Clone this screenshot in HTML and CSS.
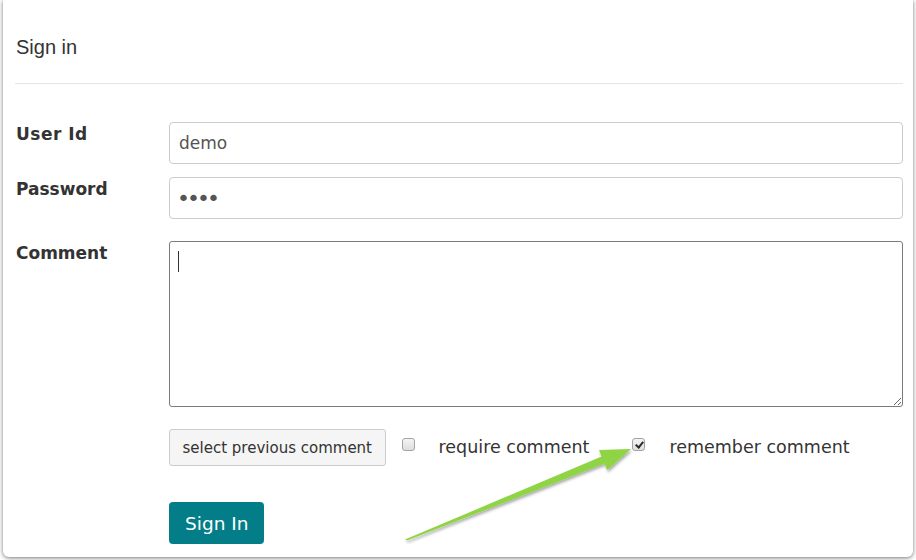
FILE: index.html
```html
<!DOCTYPE html>
<html>
<head>
<meta charset="utf-8">
<link rel="stylesheet" href="styles.css">
</head>
<body>
<div class="page">
  <div class="card">
    <div class="card-header">Sign in</div>
    <form class="form">
      <div class="row row-user">
        <label class="lbl lbl-user" for="uid">User Id</label>
        <input class="field" id="uid" type="text" value="demo">
      </div>
      <div class="row row-pass">
        <label class="lbl" for="pwd">Password</label>
        <input class="field field-pwd" id="pwd" type="password" value="demo">
      </div>
      <div class="row row-comment">
        <label class="lbl" for="cmt">Comment</label>
        <div class="ta-wrap">
          <textarea class="ta" id="cmt"></textarea>
          <span class="caret"></span>
        </div>
      </div>
      <div class="row row-opts">
        <span></span>
        <div class="opts">
          <button type="button" class="btn-prev">select previous comment</button>
          <label class="chk chk-first"><input type="checkbox" class="cb"><span>require comment</span></label>
          <label class="chk"><input type="checkbox" class="cb" checked><span>remember comment</span></label>
        </div>
      </div>
      <div class="row row-submit">
        <span></span>
        <div><button type="button" class="btn-sign">Sign In</button></div>
      </div>
    </form>
  </div>
  <svg class="arrow" width="916" height="560" viewBox="0 0 916 560">
    <defs>
      <filter id="sh" x="-10%" y="-10%" width="120%" height="130%">
        <feDropShadow dx="1" dy="2" stdDeviation="1.5" flood-color="#000" flood-opacity="0.35"/>
      </filter>
    </defs>
    <polygon filter="url(#sh)" fill="#8fd444" points="405,539.5 601.6,456.6 599,449.9 631,449 607.2,470.3 604.6,463.6 407,540.5"/>
  </svg>
</div>
</body>
</html>
```
FILE: styles.css
```css
html, body {
  margin: 0;
  padding: 0;
  background: #ffffff;
}
.page {
  position: relative;
  width: 916px;
  height: 560px;
  overflow: hidden;
  padding: 0 3px;
  box-sizing: border-box;
}
.card {
  background: #fff;
  border-radius: 0 0 6px 6px;
  box-shadow: 0 1px 4px rgba(0, 0, 0, 0.55);
  padding-bottom: 13px;
}
.card-header {
  margin: 0 10px 0 12px;
  padding: 36px 0 24px 1px;
  font-family: "Liberation Sans", Arial, sans-serif;
  font-size: 20px;
  line-height: 23px;
  color: #333;
  border-bottom: 1px solid #e5e5e5;
}
.form {
  margin: 0 10px 0 12px;
  padding-top: 38px;
  font-family: "DejaVu Sans", Verdana, sans-serif;
  color: #333;
}
.row {
  display: grid;
  grid-template-columns: 154px 1fr;
}
.row-user { margin-bottom: 13px; }
.row-pass { margin-bottom: 22px; }
.row-comment { margin-bottom: 22px; }
.row-opts { margin-bottom: 36px; }
.lbl {
  font-weight: bold;
  font-size: 17px;
  padding-top: 2px;
  padding-left: 1px;
  color: #333;
}
.lbl-user {
  letter-spacing: 0.5px;
}
.field {
  height: 42px;
  box-sizing: border-box;
  border: 1px solid #ccc;
  border-radius: 4px;
  padding: 0 9px;
  font-family: "DejaVu Sans", Verdana, sans-serif;
  font-size: 17px;
  color: #555;
  outline: none;
  width: 100%;
  margin: 0;
}
.field-pwd {
  font-size: 22px;
  letter-spacing: -3px;
  padding-left: 7px;
}
.ta-wrap {
  position: relative;
  height: 166px;
}
.ta {
  display: block;
  width: 100%;
  height: 166px;
  box-sizing: border-box;
  border: 1px solid #7a7a7a;
  border-radius: 3px;
  padding: 8px;
  margin: 0;
  font-family: "DejaVu Sans", Verdana, sans-serif;
  font-size: 17px;
  color: #555;
  outline: none;
  resize: both;
}
.caret {
  position: absolute;
  left: 9px;
  top: 10px;
  width: 1px;
  height: 21px;
  background: #333;
}
.opts {
  display: flex;
  align-items: center;
  height: 37px;
}
.btn-prev {
  height: 37px;
  box-sizing: border-box;
  padding: 0 12.5px;
  border: 1px solid #ccc;
  border-radius: 3px;
  background: #f5f5f5;
  font-family: "DejaVu Sans", Verdana, sans-serif;
  font-size: 15px;
  color: #333;
  margin: 0;
}
.chk {
  display: flex;
  align-items: center;
  font-size: 17.5px;
  color: #333;
  margin-left: 43px;
}
.chk-first {
  margin-left: 16px;
}
.chk span {
  margin-left: 24px;
  padding-bottom: 2px;
}
.cb {
  appearance: none;
  -webkit-appearance: none;
  width: 13px;
  height: 13px;
  margin: 0 0 6px 0;
  box-sizing: border-box;
  border: 1px solid #a3a3a3;
  border-radius: 3px;
  background: linear-gradient(#f4f4f4, #dedede);
  position: relative;
}
.cb:checked::after {
  content: "";
  position: absolute;
  left: 3.5px;
  top: 1px;
  width: 3px;
  height: 6px;
  border-right: 2px solid #2a2a2a;
  border-bottom: 2px solid #2a2a2a;
  transform: rotate(40deg);
}
.btn-sign {
  height: 42px;
  padding: 0 16px;
  border: none;
  border-radius: 4px;
  background: #037e88;
  color: #fff;
  font-family: "DejaVu Sans", Verdana, sans-serif;
  font-size: 18.5px;
  margin: 0;
}
.arrow {
  position: absolute;
  left: 0;
  top: 0;
  pointer-events: none;
}
```
